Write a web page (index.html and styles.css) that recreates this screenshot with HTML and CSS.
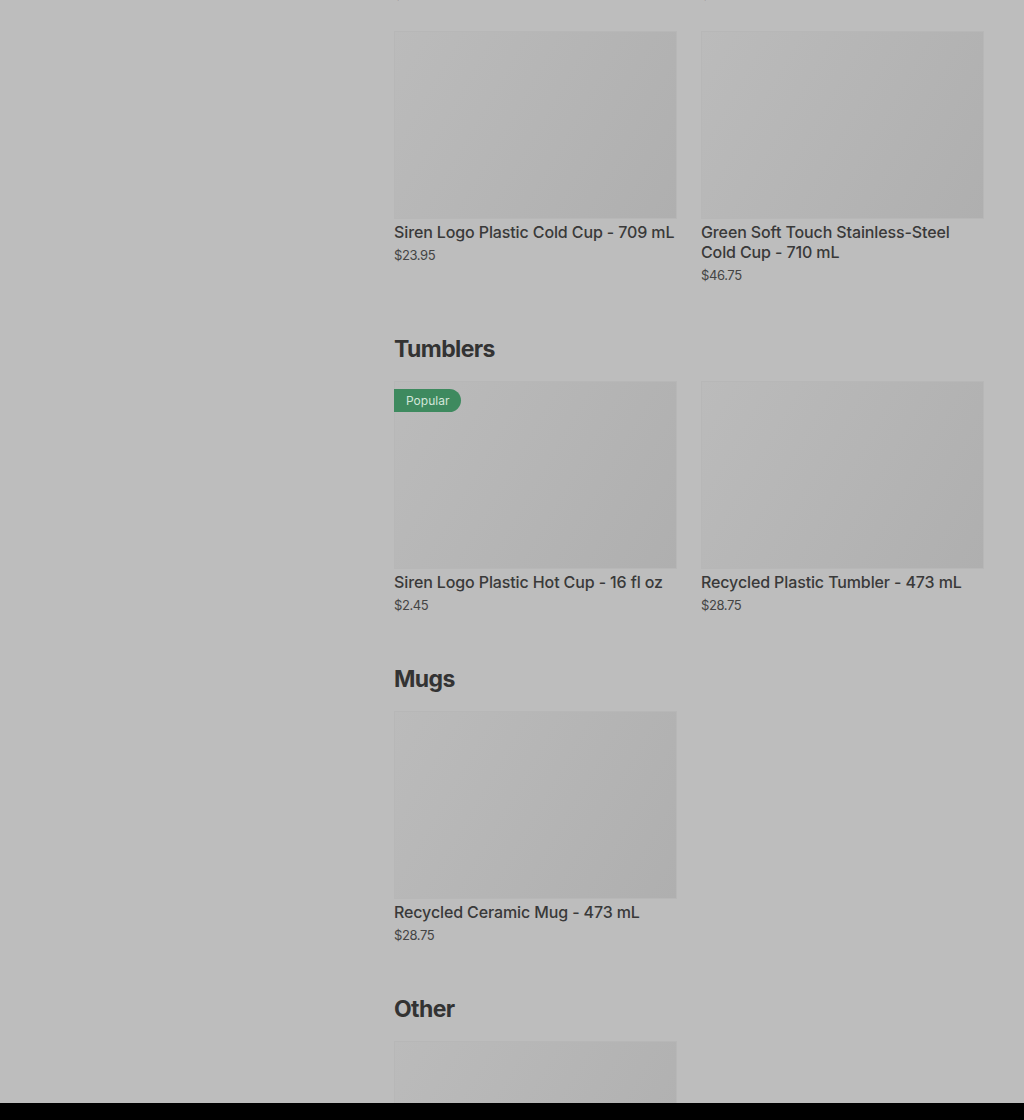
FILE: index.html
```html
<!DOCTYPE html>
<html lang="en">
<head>
  <meta charset="UTF-8" />
  <meta name="viewport" content="width=device-width, initial-scale=1.0" />
  <title>Drinkware</title>
  <link rel="stylesheet" href="styles.css">
</head>
<body>
  <div class="page">
    <aside class="sidebar"></aside>

    <main class="catalog">
      <div class="product-grid continued">
        <p class="product-price">$40.25</p>
        <p class="product-price">$9.95</p>
      </div>

      <div class="product-grid">
        <div class="product">
          <div class="product-image"></div>
          <h4 class="product-name">Siren Logo Plastic Cold Cup - 709 mL</h4>
          <p class="product-price">$23.95</p>
        </div>
        <div class="product">
          <div class="product-image"></div>
          <h4 class="product-name">Green Soft Touch Stainless-Steel Cold Cup - 710 mL</h4>
          <p class="product-price">$46.75</p>
        </div>
      </div>

      <section class="category">
        <h2 class="category-title">Tumblers</h2>
        <div class="product-grid">
          <div class="product">
            <div class="product-image">
              <span class="badge">Popular</span>
            </div>
            <h4 class="product-name">Siren Logo Plastic Hot Cup - 16 fl oz</h4>
            <p class="product-price">$2.45</p>
          </div>
          <div class="product">
            <div class="product-image"></div>
            <h4 class="product-name">Recycled Plastic Tumbler - 473 mL</h4>
            <p class="product-price">$28.75</p>
          </div>
        </div>
      </section>

      <section class="category">
        <h2 class="category-title">Mugs</h2>
        <div class="product-grid">
          <div class="product">
            <div class="product-image"></div>
            <h4 class="product-name">Recycled Ceramic Mug - 473 mL</h4>
            <p class="product-price">$28.75</p>
          </div>
        </div>
      </section>

      <section class="category">
        <h2 class="category-title">Other</h2>
        <div class="product-grid">
          <div class="product">
            <div class="product-image"></div>
            <h4 class="product-name">Siren Logo Ceramic Tumbler - 355 mL</h4>
            <p class="product-price">$19.95</p>
          </div>
        </div>
      </section>
    </main>
  </div>

  <div class="bottom-bar"></div>
</body>
</html>
```

FILE: styles.css
```css
html,
body {
  margin: 0;
  height: 100%;
  overflow: hidden;
}

body {
  font-family: Inter, 'Noto Sans', sans-serif;
  background: #bdbdbd;
  color: #393939;
}

.page {
  display: grid;
  grid-template-columns: 394px 590px;
}

.catalog {
  margin-top: -15px;
}

.product-grid {
  display: grid;
  grid-template-columns: 1fr 1fr;
  column-gap: 24px;
  row-gap: 28px;
}

.product-grid.continued {
  margin-bottom: 28px;
}

.product-image {
  position: relative;
  height: 188px;
  background: linear-gradient(120deg, #bbbbbb 0%, #b5b5b5 50%, #afafaf 100%);
  box-shadow: inset 0 0 0 1px #b7b7b7;
}

.badge {
  position: absolute;
  top: 8px;
  left: 0;
  height: 23px;
  line-height: 23px;
  padding: 0 12px;
  font-size: 12px;
  color: #d3e6da;
  background: #3e8a5f;
  border-radius: 0 12px 12px 0;
}

.product-name {
  margin: 3px 0 0;
  font-size: 16px;
  line-height: 20px;
  font-weight: 500;
  letter-spacing: -0.12px;
  color: #393939;
}

.product-price {
  margin: 4px 0 0;
  font-size: 13px;
  line-height: 18px;
  letter-spacing: -0.4px;
  color: #444;
}

.continued .product-price {
  margin: 0;
}

.category {
  margin-top: 49px;
}

.category-title {
  margin: 0 0 16px;
  font-size: 23px;
  line-height: 32px;
  font-weight: 700;
  letter-spacing: -0.6px;
  color: #333;
}

.bottom-bar {
  position: fixed;
  left: 0;
  right: 0;
  bottom: 0;
  height: 17px;
  background: #000;
}
```
